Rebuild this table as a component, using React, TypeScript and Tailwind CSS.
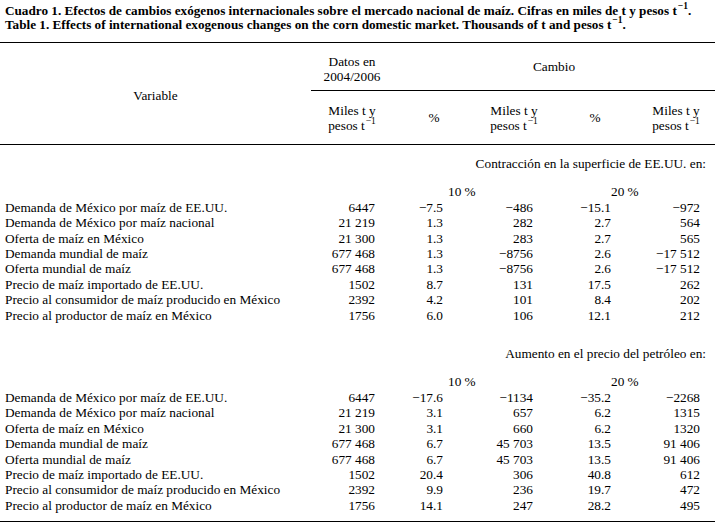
import React from "react";

type Row = [string, string, string, string, string, string];

const sec1: Row[] = [
  ["Demanda de México por maíz de EE.UU.", "6447", "−7.5", "−486", "−15.1", "−972"],
  ["Demanda de México por maíz nacional", "21 219", "1.3", "282", "2.7", "564"],
  ["Oferta de maíz en México", "21 300", "1.3", "283", "2.7", "565"],
  ["Demanda mundial de maíz", "677 468", "1.3", "−8756", "2.6", "−17 512"],
  ["Oferta mundial de maíz", "677 468", "1.3", "−8756", "2.6", "−17 512"],
  ["Precio de maíz importado de EE.UU.", "1502", "8.7", "131", "17.5", "262"],
  ["Precio al consumidor de maíz producido en México", "2392", "4.2", "101", "8.4", "202"],
  ["Precio al productor de maíz en México", "1756", "6.0", "106", "12.1", "212"],
];

const sec2: Row[] = [
  ["Demanda de México por maíz de EE.UU.", "6447", "−17.6", "−1134", "−35.2", "−2268"],
  ["Demanda de México por maíz nacional", "21 219", "3.1", "657", "6.2", "1315"],
  ["Oferta de maíz en México", "21 300", "3.1", "660", "6.2", "1320"],
  ["Demanda mundial de maíz", "677 468", "6.7", "45 703", "13.5", "91 406"],
  ["Oferta mundial de maíz", "677 468", "6.7", "45 703", "13.5", "91 406"],
  ["Precio de maíz importado de EE.UU.", "1502", "20.4", "306", "40.8", "612"],
  ["Precio al consumidor de maíz producido en México", "2392", "9.9", "236", "19.7", "472"],
  ["Precio al productor de maíz en México", "1756", "14.1", "247", "28.2", "495"],
];

function Sup() {
  return <sup className="text-[9.5px] top-[-0.6em] ml-[1px]">−1</sup>;
}

function MilesHeader() {
  return (
    <div className="flex flex-col items-center leading-[15px]">
      <span>Miles t y</span>
      <span>
        pesos t<Sup />
      </span>
    </div>
  );
}

function Section({ title, rows, gap }: { title: string; rows: Row[]; gap: string }) {
  return (
    <div>
      <div className="flex justify-end pr-[9px] leading-[15.4px]">{title}</div>
      <div className={"grid grid-cols-[305px_70px_68px_90px_78px_89px] leading-[15.4px] " + gap}>
        <div />
        <div />
        <div />
        <div className="pl-[5px]">10 %</div>
        <div />
        <div>20 %</div>
      </div>
      {rows.map((r, i) => (
        <div
          key={i}
          className="grid grid-cols-[305px_70px_68px_90px_78px_89px] leading-[15.4px]"
        >
          <div className="pl-[5px] whitespace-nowrap">{r[0]}</div>
          <div className="text-right">{r[1]}</div>
          <div className="text-right">{r[2]}</div>
          <div className="text-right">{r[3]}</div>
          <div className="text-right">{r[4]}</div>
          <div className="text-right">{r[5]}</div>
        </div>
      ))}
    </div>
  );
}

export default function App() {
  return (
    <div className="w-[718px] h-[530px] bg-white text-black font-['Liberation_Serif',serif] text-[13.3px] overflow-hidden">
      <div className="pl-[5px] pt-[4px] font-bold text-[13.2px] leading-[14px]">
        <p>
          Cuadro 1. Efectos de cambios exógenos internacionales sobre el mercado nacional de maíz. Cifras en miles de t y pesos t
          <Sup />.
        </p>
        <p>
          Table 1. Effects of international exogenous changes on the corn domestic market. Thousands of t and pesos t
          <Sup />.
        </p>
      </div>

      <div className="w-[715px] mt-[10px] border-t-[1.5px] border-b-[1.5px] border-black grid grid-cols-[311px_82px_82px_78px_84px_78px]">
        <div className="row-span-2 flex items-center justify-center pt-[4px]">Variable</div>
        <div className="flex flex-col items-center leading-[15px] pt-[11px] pb-[6px]">
          <span>Datos en</span>
          <span>2004/2006</span>
        </div>
        <div className="col-span-4 flex items-center justify-center">Cambio</div>
        <div className="col-span-5 border-t border-black pt-[12px] pb-[11px] grid grid-cols-[82px_82px_78px_84px_78px]">
          <MilesHeader />
          <div className="flex items-center justify-center">%</div>
          <MilesHeader />
          <div className="flex items-center justify-center">%</div>
          <MilesHeader />
        </div>
      </div>

      <div className="w-[715px] border-b-[1.5px] border-black pt-[11px] pb-[8px]">
        <Section title="Contracción en la superficie de EE.UU. en:" rows={sec1} gap="mt-[13px]" />
        <div className="mt-[23px]">
          <Section title="Aumento en el precio del petróleo en:" rows={sec2} gap="mt-[13px]" />
        </div>
      </div>
    </div>
  );
}
